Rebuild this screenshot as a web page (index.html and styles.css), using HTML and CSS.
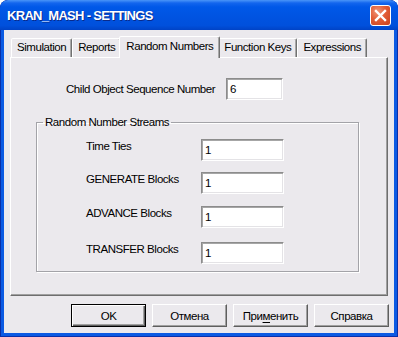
FILE: index.html
```html
<!DOCTYPE html>
<html>
<head>
<meta charset="utf-8">
<link rel="stylesheet" href="styles.css">
</head>
<body>
<div class="window">
  <div class="titlebar">
    <span class="title">KRAN_MASH - SETTINGS</span>
    <div class="close">
      <svg width="13" height="13" viewBox="0 0 13 13"><path d="M2 2 L11 11 M11 2 L2 11" stroke="#fff" stroke-width="2.4" stroke-linecap="square" fill="none"/></svg>
    </div>
  </div>
  <div class="client">
    <div class="tabs">
      <div class="tab">Simulation</div>
      <div class="tab">Reports</div>
      <div class="tab active">Random Numbers</div>
      <div class="tab">Function Keys</div>
      <div class="tab">Expressions</div>
    </div>
    <div class="panel">
      <div class="child-row">
        <span>Child Object Sequence Number</span>
        <div class="input short">6</div>
      </div>
      <fieldset class="group">
        <legend>Random Number Streams</legend>
        <div class="stream"><span>Time Ties</span><div class="input">1</div></div>
        <div class="stream"><span>GENERATE Blocks</span><div class="input">1</div></div>
        <div class="stream"><span>ADVANCE Blocks</span><div class="input">1</div></div>
        <div class="stream"><span>TRANSFER Blocks</span><div class="input">1</div></div>
      </fieldset>
    </div>
    <div class="buttons">
      <div class="btn default"><span>OK</span></div>
      <div class="btn"><span>Отмена</span></div>
      <div class="btn"><span>При<u>м</u>енить</span></div>
      <div class="btn"><span>Справка</span></div>
    </div>
  </div>
</div>
</body>
</html>
```
FILE: styles.css
```css
* { box-sizing: border-box; }
html, body { margin: 0; padding: 0; background: #fff; }
body {
  width: 398px; height: 337px; overflow: hidden;
  font-family: "Liberation Sans", Arial, sans-serif;
  font-size: 11.5px; letter-spacing: -0.45px; color: #000;
}
.window {
  width: 398px; height: 337px;
  border-radius: 8px 8px 0 0;
  background: #0b5ae3;
  box-shadow: inset 0 0 0 1px #0a2fa8;
  display: flex; flex-direction: column; overflow: hidden;
}
.titlebar {
  height: 30px; flex: none;
  display: flex; align-items: center; justify-content: space-between;
  padding: 0 7px 0 7px;
  border-radius: 8px 8px 0 0;
  background: linear-gradient(#4a95f8 0, #1366ee 3px, #0058e8 7px, #0054e2 50%, #0050dc 85%, #0043c6 100%);
}
.title {
  color: #fff; font-weight: bold; font-size: 13px; letter-spacing: -0.7px;
  text-shadow: 1px 1px 0 #0a2a8a;
  margin-top: 1px;
}
.close {
  width: 21px; height: 21px; margin-top: 1px;
  border: 1px solid #fff; border-radius: 3px;
  background: radial-gradient(circle at 35% 30%, #f0967a 0, #e25d36 45%, #c9401c 100%);
  display: flex; align-items: center; justify-content: center;
}
.client {
  flex: 1; margin: 0 4px 4px;
  background: #ebe9ed;
  display: flex; flex-direction: column;
}
.tabs {
  display: flex; align-items: flex-end;
  height: 27px; flex: none; padding-left: 7px;
  position: relative; z-index: 1;
}
.tab {
  height: 19px; padding: 0 5px; line-height: 17px;
  background: #ebe9ed;
  border: 1px solid; border-bottom: none;
  border-color: #fff #717171 transparent #fff;
  box-shadow: inset -1px 0 0 #a8a8a8;
  border-radius: 2px 2px 0 0;
}
.tab.active {
  height: 22px; margin: 0 -2px -1px; padding: 0 6px; line-height: 18px;
  position: relative; z-index: 2;
}
.panel {
  margin-left: 6px; width: 378px; height: 239px; flex: none;
  border: 1px solid; border-color: #fff #6e6e6e #6e6e6e #fff;
  box-shadow: inset -1px -1px 0 #a0a0a0;
}
.child-row {
  display: grid; grid-template-columns: 160px 57px; align-items: center;
  margin: 20px 0 0 55px;
}
.input {
  height: 22px; width: 83px; background: #fff;
  border: 1px solid; border-color: #8c8c8c #fff #fff #8c8c8c;
  box-shadow: inset 1px 1px 0 #a6a6a6, inset -1px -1px 0 #e4e3e6;
  padding: 2px 0 0 3px; line-height: 16px;
}
.input.short { width: 57px; }
.group {
  margin: 15px 0 0 25px; width: 323px; height: 157px;
  border: 1px solid #a3a3a8;
  box-shadow: inset 1px 1px 0 #fff, 1px 1px 0 #fff;
  padding: 10px 0 0 0;
  display: flex; flex-direction: column;
  min-width: 0;
}
.group legend { padding: 0 2px; margin-left: 6px; line-height: 14px; }
.stream {
  display: grid; grid-template-columns: 115px 83px; align-items: start;
  line-height: 14px; margin-left: 49px;
}
.stream:nth-of-type(2) { margin-top: 11px; }
.stream:nth-of-type(3) { margin-top: 12px; }
.stream:nth-of-type(4) { margin-top: 14px; }
.buttons {
  display: flex; justify-content: flex-end; gap: 6px;
  padding-right: 5px; margin-top: 8px;
}
.btn {
  width: 75px; height: 23px;
  display: flex; align-items: center; justify-content: center;
  border: 1px solid; border-color: #fff #5e5e5e #5e5e5e #fff;
  box-shadow: inset -1px -1px 0 #a0a0a0;
  background: #ebe9ed;
}
.btn.default {
  border: 1px solid #000;
  box-shadow: inset 1px 1px 0 #fff, inset -1px -1px 0 #5e5e5e, inset -2px -2px 0 #a0a0a0;
}
.btn u { text-decoration-thickness: 1px; text-underline-offset: 2px; }
```
